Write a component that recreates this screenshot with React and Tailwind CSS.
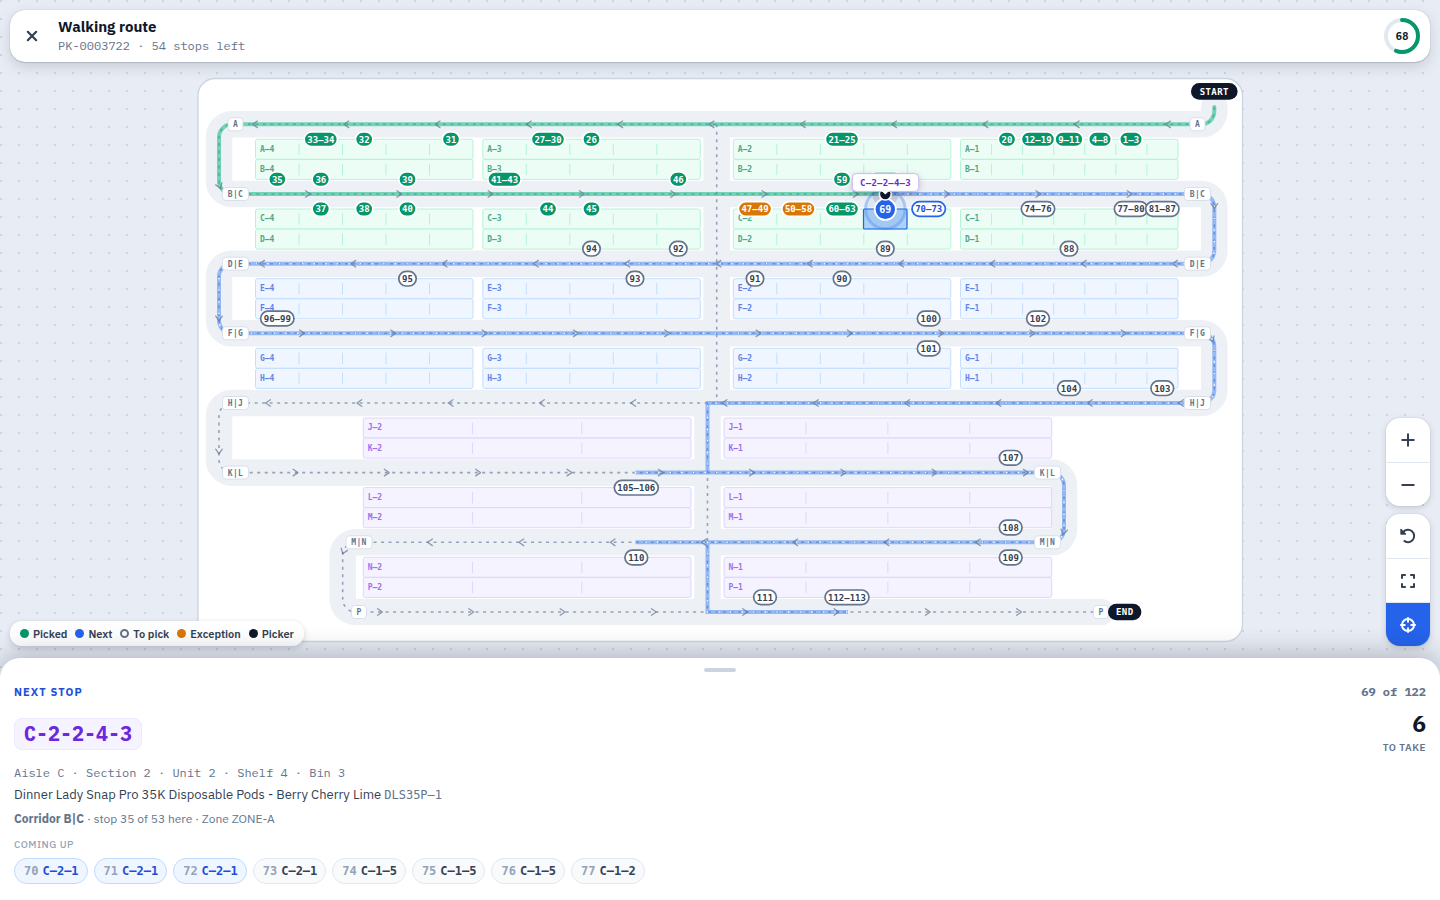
import React from "react";

const SANS = "font-['IBM_Plex_Sans','Roboto',sans-serif]";
const MONO = "font-['IBM_Plex_Mono','Liberation_Mono',monospace]";
const CODE = "font-['DejaVu_Sans_Mono',monospace]";

/* ---------- warehouse geometry ---------- */

const lane = { A: 124.3, BC: 194, DE: 263.7, FG: 333.3, HJ: 403, KL: 472.6, MN: 542.3, P: 612 };

const TONES = {
  green: { box: "fill-[#ecfdf5] stroke-[#b5f3d8]", tick: "stroke-[#b5f3d8]", text: "fill-[#4ca78a]" },
  blue: { box: "fill-[#eff6ff] stroke-[#c3defe]", tick: "stroke-[#c3defe]", text: "fill-[#5f85ea]" },
  violet: { box: "fill-[#f5f3ff] stroke-[#ddd6fe]", tick: "stroke-[#ddd6fe]", text: "fill-[#a070ee]" },
};

const UPPER = [
  { n: 4, x: 255.5, w: 217.5, units: 5 },
  { n: 3, x: 482.8, w: 217.5, units: 5 },
  { n: 2, x: 733.3, w: 217.5, units: 5 },
  { n: 1, x: 960.5, w: 217.5, units: 7 },
];
const LOWER = [
  { n: 2, x: 363.3, w: 327.7, units: 3 },
  { n: 1, x: 724, w: 327.7, units: 4 },
];

const RACKS = [
  { lane: "A", aisles: ["A", "B"], tone: "green", sections: UPPER },
  { lane: "BC", aisles: ["C", "D"], tone: "green", sections: UPPER },
  { lane: "DE", aisles: ["E", "F"], tone: "blue", sections: UPPER },
  { lane: "FG", aisles: ["G", "H"], tone: "blue", sections: UPPER },
  { lane: "HJ", aisles: ["J", "K"], tone: "violet", sections: LOWER },
  { lane: "KL", aisles: ["L", "M"], tone: "violet", sections: LOWER },
  { lane: "MN", aisles: ["N", "P"], tone: "violet", sections: LOWER },
];

const ROWS = RACKS.flatMap((rack) =>
  rack.aisles.flatMap((aisle, i) =>
    rack.sections.map((s) => ({ ...s, aisle, tone: rack.tone, y: lane[rack.lane] + 15 + i * 20.1 }))
  )
);

const L = 219;
const R = 1214.3;
const leftTurn = (x, y1, y2) => `H${x + 13} A13 13 0 0 0 ${x} ${y1 + 13} V${y2 - 13} A13 13 0 0 0 ${x + 13} ${y2}`;
const rightTurn = (x, y1, y2) => `H${x - 13} A13 13 0 0 1 ${x} ${y1 + 13} V${y2 - 13} A13 13 0 0 1 ${x - 13} ${y2}`;

const START = `M${R} 107 V${lane.A - 13} A13 13 0 0 1 ${R - 13} ${lane.A}`;
const CORRIDOR = [
  START,
  leftTurn(L, lane.A, lane.BC),
  rightTurn(R, lane.BC, lane.DE),
  leftTurn(L, lane.DE, lane.FG),
  rightTurn(R, lane.FG, lane.HJ),
  leftTurn(L, lane.HJ, lane.KL),
  rightTurn(1064, lane.KL, lane.MN),
  leftTurn(342.7, lane.MN, lane.P),
  "H1101",
].join(" ");
const CROSS_UPPER = `M716.7 ${lane.A} V${lane.HJ}`;
const CROSS_LOWER = `M707.5 ${lane.HJ} V${lane.P}`;

const WALKED = `${START} ${leftTurn(L, lane.A, lane.BC)} H885`;
const AHEAD = [
  `M885 ${lane.BC}`,
  rightTurn(R, lane.BC, lane.DE),
  leftTurn(L, lane.DE, lane.FG),
  rightTurn(R, lane.FG, lane.HJ),
  `H707.5 V${lane.KL}`,
  `M635.5 ${lane.KL}`,
  rightTurn(1064, lane.KL, lane.MN),
  "H635.5",
  `M707.5 ${lane.MN} V${lane.P} H848`,
].join(" ");

const run = (first, count, y, angle) =>
  Array.from({ length: count }, (_, i) => ({ x: first + i * 91.3, y, angle }));
const CHEVRONS = [
  ...run(255, 11, lane.A, 180),
  ...run(308, 10, lane.BC, 0),
  ...run(262, 11, lane.DE, 180),
  ...run(302, 10, lane.FG, 0),
  ...run(268, 11, lane.HJ, 180),
  ...run(295.5, 9, lane.KL, 0),
  ...run(430, 7, lane.MN, 180),
  ...run(380, 8, lane.P, 0),
  { x: 219.6, y: 186, angle: 70 },
  { x: 1214.3, y: 206, angle: 90 },
  { x: 219, y: 318.5, angle: 90 },
  { x: 1212, y: 339.5, angle: 65 },
  { x: 219, y: 451.5, angle: 90 },
  { x: 1063.8, y: 532, angle: 100 },
  { x: 343.5, y: 551.5, angle: 110 },
];

const TAGS = [
  ["A", 235.5, "A"], ["A", 1197.5, "A"],
  ["B|C", 235.5, "BC"], ["B|C", 1197.5, "BC"],
  ["D|E", 235.5, "DE"], ["D|E", 1197.5, "DE"],
  ["F|G", 235.5, "FG"], ["F|G", 1197.5, "FG"],
  ["H|J", 235.5, "HJ"], ["H|J", 1197.5, "HJ"],
  ["K|L", 235.5, "KL"], ["K|L", 1047.5, "KL"],
  ["M|N", 359, "MN"], ["M|N", 1047.5, "MN"],
  ["P", 359, "P"], ["P", 1101, "P"],
];

const STOPS = {
  picked: [
    ["33–34", 320.8, 139.3], ["32", 364.2, 139.3], ["31", 451, 139.3], ["27–30", 548, 139.3], ["26", 591.5, 139.3],
    ["21–25", 842, 139.3], ["20", 1007, 139.3], ["12–19", 1038, 139.3], ["9–11", 1069, 139.3], ["4–8", 1100, 139.3],
    ["1–3", 1131, 139.3], ["35", 277.3, 179.3], ["36", 320.8, 179.3], ["39", 407.5, 179.3], ["41–43", 504.5, 179.3],
    ["46", 678.3, 179.3], ["59", 842, 179.3], ["37", 320.8, 209], ["38", 364.2, 209],
    ["40", 407.5, 209], ["44", 548, 209], ["45", 591.5, 209], ["60–63", 842, 209],
  ],
  exception: [["47–49", 755, 209], ["50–58", 798.5, 209]],
  near: [["70–73", 928.7, 209]],
  todo: [
    ["74–76", 1038, 209], ["77–80", 1131, 209], ["81–87", 1162.3, 209],
    ["94", 591.5, 248.7], ["92", 678.3, 248.7], ["89", 885.3, 248.7], ["88", 1069, 248.7],
    ["95", 407.5, 278.7], ["93", 635, 278.7], ["91", 755, 278.7], ["90", 842, 278.7],
    ["96–99", 277.3, 318.5], ["100", 928.7, 318.5], ["102", 1038, 318.5], ["101", 928.7, 348.5],
    ["104", 1069, 388.2], ["103", 1162.3, 388.2], ["107", 1010.7, 457.8], ["105–106", 636.3, 487.7],
    ["108", 1010.7, 527.5], ["110", 636.3, 557.5], ["109", 1010.7, 557.5], ["111", 765, 597.3],
    ["112–113", 847, 597.3],
  ],
};
const STOP_TONES = {
  picked: { box: "fill-[#059669] stroke-white", text: "fill-white" },
  exception: { box: "fill-[#d97706] stroke-white", text: "fill-white" },
  near: { box: "fill-white stroke-[#2563eb]", text: "fill-[#1d4ed8]" },
  todo: { box: "fill-white stroke-[#64748b]", text: "fill-[#334155]" },
};

/* ---------- map pieces ---------- */

function RackRow({ aisle, n, x, y, w, units, tone }) {
  const t = TONES[tone];
  return (
    <g>
      <rect x={x} y={y} width={w} height={20} rx={2} className={t.box} strokeWidth="1" />
      {Array.from({ length: units - 1 }, (_, i) => {
        const tx = x + (w / units) * (i + 1);
        return <line key={i} x1={tx} x2={tx} y1={y + 4.4} y2={y + 15.8} className={t.tick} strokeWidth="1" />;
      })}
      <text x={x + 4.4} y={y + 12.4} className={`${CODE} ${t.text} text-[8px] font-bold`}>{`${aisle}–${n}`}</text>
    </g>
  );
}

function Stop({ label, x, y, kind }) {
  const t = STOP_TONES[kind];
  const w = label.length * 5.3 + 6.8;
  return (
    <g>
      <rect x={x - w / 2} y={y - 7.3} width={w} height={14.6} rx={7.3} className={t.box} strokeWidth="1.7" />
      <text x={x} y={y + 3.3} textAnchor="middle" className={`${CODE} ${t.text} text-[9px] font-bold`}>{label}</text>
    </g>
  );
}

function Terminal({ label, x, y, w }) {
  return (
    <g>
      <rect x={x - w / 2} y={y - 8.3} width={w} height={16.6} rx={8.3} className="fill-[#0f172a]" />
      <text x={x} y={y + 3.4} textAnchor="middle" className={`${CODE} fill-white text-[9px] font-bold tracking-wider`}>{label}</text>
    </g>
  );
}

function WarehouseMap() {
  return (
    <svg viewBox="190 62 1060 596" className="h-full w-full" role="img" aria-label="Warehouse walking route">
      <rect x="198" y="78.5" width="1044.5" height="563" rx="17" className="fill-white stroke-[#cbd5e1]" strokeWidth="1.3" />

      <g fill="none" className="stroke-[#edf1f6]" strokeWidth="26.6">
        <path d={CORRIDOR} strokeLinecap="round" />
        <path d={CROSS_UPPER} />
        <path d={CROSS_LOWER} />
      </g>

      {ROWS.map((row) => <RackRow key={`${row.aisle}${row.n}`} {...row} />)}

      <g fill="none" className="stroke-[#94a3b8]" strokeWidth="1.6" strokeDasharray="3 4.5">
        <path d={CORRIDOR} />
        <path d={CROSS_UPPER} />
        <path d={CROSS_LOWER} />
      </g>
      <path d={WALKED} fill="none" className="stroke-[#10b981]/55" strokeWidth="4" strokeLinecap="round" />
      <path d={AHEAD} fill="none" className="stroke-[#3b82f6]/50" strokeWidth="4" />
      <path d={AHEAD} fill="none" className="stroke-white" strokeWidth="1.5" strokeLinecap="round" strokeDasharray="0.1 11.5" />

      <g fill="none" className="stroke-[#64748b]/70" strokeWidth="1.3" strokeLinecap="round" strokeLinejoin="round">
        {CHEVRONS.map((c, i) => (
          <path key={i} d="M-2.4 -3.3 L2.4 0 L-2.4 3.3" transform={`translate(${c.x} ${c.y}) rotate(${c.angle})`} />
        ))}
      </g>

      {TAGS.map(([label, x, l]) => {
        const w = label.length === 1 ? 15 : 26;
        return (
          <g key={label + x}>
            <rect x={x - w / 2} y={lane[l] - 6.5} width={w} height={13} rx={3.3} className="fill-white stroke-[#d5dde8]" strokeWidth="0.9" />
            <text x={x} y={lane[l] + 3} textAnchor="middle" className={`${CODE} fill-[#64748b] text-[8px] font-bold tracking-wider`}>{label}</text>
          </g>
        );
      })}

      <rect x="863.5" y="209" width="43.5" height="20" rx="1" className="fill-[#3b82f6]/35 stroke-[#2563eb]" strokeWidth="1.2" />

      {Object.entries(STOPS).flatMap(([kind, list]) =>
        list.map(([label, x, y]) => <Stop key={label} label={label} x={x} y={y} kind={kind} />)
      )}
      <rect x="868.6" y="172" width="33.4" height="14.6" rx="7.3" className="fill-[#059669] stroke-white" strokeWidth="1.7" />

      <Terminal label="START" x={1214.3} y={91.4} w={46.6} />
      <Terminal label="END" x={1124.7} y={612} w={33.4} />

      <circle cx="885.3" cy="209" r="19.8" className="fill-[#2563eb]/8 stroke-[#3b82f6]/35" strokeWidth="3" />
      <circle cx="885.3" cy="194" r="13" className="fill-[#0f172a]/12" />
      <circle cx="885.3" cy="209.3" r="10.6" className="fill-[#2563eb] stroke-white" strokeWidth="1.8" />
      <text x="885.3" y="213" textAnchor="middle" className={`${CODE} fill-white text-[10px] font-bold`}>69</text>
      <circle cx="885.3" cy="194" r="6" className="fill-[#0f172a] stroke-white" strokeWidth="1.7" />

      <g>
        <rect x="852.3" y="173.6" width="66.4" height="17.8" rx="4" className="fill-white stroke-[#cdb8f8] drop-shadow-[0_2px_3px_rgba(15,23,42,0.22)]" strokeWidth="1" />
        <path d="M881.6 191 L885.3 194.6 L889 191 Z" className="fill-white" />
        <text x="885.5" y="186" textAnchor="middle" className={`${CODE} fill-[#6d28d9] text-[9px] font-bold tracking-wide`}>C–2–2–4–3</text>
      </g>
    </svg>
  );
}

/* ---------- chrome ---------- */

function ProgressRing({ done, total }) {
  const length = 2 * Math.PI * 16;
  return (
    <div className="relative grid size-9 place-items-center">
      <svg viewBox="0 0 36 36" className="absolute inset-0 size-9 -rotate-90" fill="none" strokeWidth="4" aria-hidden="true">
        <circle cx="18" cy="18" r="16" className="stroke-[#e2e8f0]" />
        <circle cx="18" cy="18" r="16" className="stroke-[#059669]" strokeLinecap="round" strokeDasharray={`${(length * done) / total} ${length}`} />
      </svg>
      <span className={`${CODE} text-[11px] leading-none font-bold text-[#0f172a]`}>{done}</span>
    </div>
  );
}

function Header() {
  return (
    <header className="relative z-10 mx-2.5 mt-2.5 flex h-[52px] shrink-0 items-center gap-1 rounded-[15px] bg-white pr-2.5 shadow-[0_0_1px_rgba(15,23,42,0.3),0_1px_1px_rgba(15,23,42,0.12),0_5px_14px_rgba(15,23,42,0.15)]">
      <button type="button" aria-label="Close" className="grid size-11 place-items-center text-[#334155]">
        <svg viewBox="0 0 24 24" className="size-6" fill="none" stroke="currentColor" strokeWidth="2.2" strokeLinecap="round" aria-hidden="true">
          <path d="M7.8 7.8l8.4 8.4M16.2 7.8l-8.4 8.4" />
        </svg>
      </button>
      <div className="min-w-0 flex-1">
        <h1 className="text-[15px] leading-5 font-bold text-[#0f172a]">Walking route</h1>
        <p className={`${MONO} text-[12px] leading-[18px] text-[#64748b]`}>PK-0003722 · 54 stops left</p>
      </div>
      <ProgressRing done={68} total={122} />
    </header>
  );
}

const LEGEND = [
  ["Picked", "bg-[#059669]"],
  ["Next", "bg-[#2563eb]"],
  ["To pick", "border-2 border-[#64748b] bg-white"],
  ["Exception", "bg-[#d97706]"],
  ["Picker", "bg-[#0f172a]"],
];

function Legend() {
  return (
    <ul className="absolute bottom-3 left-2.5 flex h-[25px] items-center gap-2 rounded-xl bg-white/95 px-2.5 shadow-[0_2px_6px_rgba(15,23,42,0.18)]">
      {LEGEND.map(([label, dot]) => (
        <li key={label} className="flex items-center gap-1 text-[11px] leading-4 font-semibold whitespace-nowrap text-[#334155]">
          <span className={`size-[9px] rounded-full ${dot}`} />
          {label}
        </li>
      ))}
    </ul>
  );
}

function MapButton({ label, active, children }) {
  return (
    <button
      type="button"
      aria-label={label}
      aria-pressed={active}
      className={`grid h-11 w-11 place-items-center border-[#e2e8f0] not-first:border-t ${active ? "bg-[#2563eb] text-white" : "bg-white text-[#334155]"}`}
    >
      <svg viewBox="0 0 24 24" className="size-6" fill="none" stroke="currentColor" strokeWidth="2" aria-hidden="true">
        {children}
      </svg>
    </button>
  );
}

function MapControls() {
  const group = "flex flex-col overflow-hidden rounded-[14px] shadow-[0_0_1px_rgba(15,23,42,0.3),0_2px_6px_rgba(15,23,42,0.16)]";
  return (
    <div className="absolute right-2.5 bottom-3 flex flex-col gap-2">
      <div className={group}>
        <MapButton label="Zoom in"><path d="M12 5.5v13M5.5 12h13" /></MapButton>
        <MapButton label="Zoom out"><path d="M5.5 12h13" /></MapButton>
      </div>
      <div className={group}>
        <MapButton label="Reset view">
          <path d="M7.2 8A6.2 6.2 0 1 1 7.8 16.6" />
          <path d="M5 5.6v4.4h4.4z" fill="currentColor" strokeWidth="1.4" strokeLinejoin="round" />
        </MapButton>
        <MapButton label="Fit route">
          <path d="M6 9.8V6h3.8M14.2 6H18v3.8M18 14.2V18h-3.8M9.8 18H6v-3.8" strokeLinejoin="round" />
        </MapButton>
        <MapButton label="Follow picker" active>
          <circle cx="12" cy="12" r="6" />
          <path d="M12 4.2v5.3M12 14.5v5.3M4.2 12h5.3M14.5 12h5.3" />
        </MapButton>
      </div>
    </div>
  );
}

const UPCOMING = [
  [70, "C–2–1", true], [71, "C–2–1", true], [72, "C–2–1", true], [73, "C–2–1"],
  [74, "C–1–5"], [75, "C–1–5"], [76, "C–1–5"], [77, "C–1–2"],
];

function StopSheet() {
  return (
    <section className="relative z-20 shrink-0 rounded-t-[20px] bg-white px-3.5 pt-2.5 pb-4 shadow-[0_-6px_24px_rgba(15,23,42,0.24)]">
      <div className="mx-auto h-1 w-8 rounded-full bg-[#cbd5e1]" />
      <div className="mt-3 flex items-center justify-between">
        <h2 className="text-[11px] leading-4 font-bold tracking-widest text-[#1d4ed8]">NEXT STOP</h2>
        <span className={`${MONO} text-[12px] leading-4 font-bold text-[#64748b]`}>69 of 122</span>
      </div>
      <div className="mt-2.5 flex items-center justify-between">
        <span className={`${MONO} rounded-lg border border-[#ede9fe] bg-[#f5f3ff] px-[9px] text-[20px] leading-[30px] font-bold text-[#6d28d9]`}>C-2-2-4-3</span>
        <div className="flex flex-col items-end gap-0.5">
          <span className="text-[23px] leading-[26px] font-bold text-[#0f172a]">6</span>
          <span className="text-[10px] leading-5 font-semibold tracking-wider text-[#64748b]">TO TAKE</span>
        </div>
      </div>
      <p className={`${MONO} mt-1.5 text-[12px] leading-[18px] text-[#64748b]`}>Aisle C · Section 2 · Unit 2 · Shelf 4 · Bin 3</p>
      <p className="mt-[3px] text-[13px] leading-5 text-[#334155]">
        Dinner Lady Snap Pro 35K Disposable Pods - Berry Cherry Lime{" "}
        <span className={`${CODE} text-[12px] text-[#64748b]`}>DLS35P–1</span>
      </p>
      <p className="mt-[5px] text-[12px] leading-[18px] text-[#64748b]">
        <strong className="font-bold">Corridor B|C</strong> · stop 35 of 53 here · Zone ZONE-A
      </p>
      <h3 className="mt-2.5 text-[10px] leading-[14px] font-medium tracking-wider text-[#94a3b8]">COMING UP</h3>
      <ul className="mt-1.5 flex flex-wrap gap-1.5">
        {UPCOMING.map(([n, code, near]) => (
          <li
            key={n}
            className={`${CODE} flex h-[26px] items-center gap-1 rounded-full border pr-2 pl-[9px] text-[12px] leading-4 font-bold ${
              near ? "border-[#bfdbfe] bg-[#eff6ff] text-[#1d4ed8]" : "border-[#e2e8f0] bg-[#f8fafc] text-[#334155]"
            }`}
          >
            <span className="text-[#94a3b8]">{n}</span>
            {code}
          </li>
        ))}
      </ul>
    </section>
  );
}

export default function App() {
  return (
    <div className={`${SANS} flex h-screen flex-col overflow-hidden bg-[#e8edf5] bg-[radial-gradient(circle_at_1px_1px,#cbd5e1_1px,transparent_1px)] bg-size-[18px_18px]`}>
      <Header />
      <main className="relative min-h-0 flex-1">
        <WarehouseMap />
        <Legend />
        <MapControls />
      </main>
      <StopSheet />
    </div>
  );
}
